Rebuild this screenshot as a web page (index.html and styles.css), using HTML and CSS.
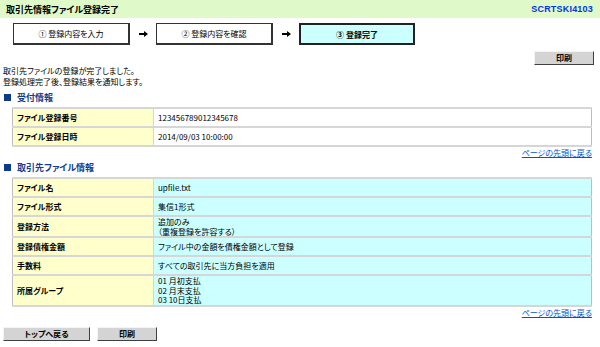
FILE: index.html
```html
<!DOCTYPE html>
<html lang="ja">
<head>
<meta charset="utf-8">
<title>取引先情報ファイル登録完了</title>
<link rel="stylesheet" href="styles.css">
</head>
<body>
<div class="header">
  <span class="title">取引先情報ファイル登録完了</span>
  <span class="code">SCRTSKI4103</span>
</div>

<div class="steps">
  <div class="step">① 登録内容を入力</div>
  <div class="arrow"><svg width="9" height="6" viewBox="0 0 9 6"><path d="M0 2h5V0l4 3-4 3V4H0z" fill="#000"/></svg></div>
  <div class="step">② 登録内容を確認</div>
  <div class="arrow"><svg width="9" height="6" viewBox="0 0 9 6"><path d="M0 2h5V0l4 3-4 3V4H0z" fill="#000"/></svg></div>
  <div class="step current">③ 登録完了</div>
</div>

<div class="toolbar">
  <button class="btn btn-print-top">印刷</button>
</div>

<div class="message">
  <p>取引先ファイルの登録が完了しました。</p>
  <p>登録処理完了後、登録結果を通知します。</p>
</div>

<h2 class="section-title"><span class="sq"></span>受付情報</h2>
<table class="info">
  <tr><th>ファイル登録番号</th><td>123456789012345678</td></tr>
  <tr><th>ファイル登録日時</th><td>2014/09/03 10:00:00</td></tr>
</table>
<div class="toplink"><a href="#">ページの先頭に戻る</a></div>

<h2 class="section-title second"><span class="sq"></span>取引先ファイル情報</h2>
<table class="info cyan">
  <tr class="r1"><th>ファイル名</th><td>upfile.txt</td></tr>
  <tr class="r1"><th>ファイル形式</th><td>集信1形式</td></tr>
  <tr class="r2"><th>登録方法</th><td>追加のみ<br>（重複登録を許容する）</td></tr>
  <tr class="r1"><th>登録債権金額</th><td>ファイル中の金額を債権金額として登録</td></tr>
  <tr class="r1"><th>手数料</th><td>すべての取引先に当方負担を適用</td></tr>
  <tr class="r3"><th>所属グループ</th><td>01 月初支払<br>02 月末支払<br>03 10日支払</td></tr>
</table>
<div class="toplink"><a href="#">ページの先頭に戻る</a></div>

<div class="bottom-buttons">
  <button class="btn btn-top">トップへ戻る</button>
  <button class="btn btn-print">印刷</button>
</div>
</body>
</html>
```

FILE: styles.css
```css
* { box-sizing: border-box; }
html, body {
  margin: 0;
  padding: 0;
  background: #ffffff;
}
body {
  font-family: "Noto Sans CJK JP", "Liberation Sans", sans-serif;
  font-size: 8px;
  color: #000;
  font-feature-settings: "palt";
  width: 600px;
}
p { margin: 0; }

.header {
  height: 18px;
  background: #dff9c8;
  display: flex;
  justify-content: space-between;
  align-items: center;
  padding: 0 7px 0 6px;
}
.title {
  font-weight: bold;
  font-size: 9px;
}
.code {
  font-family: "Liberation Sans", "DejaVu Sans", sans-serif;
  font-weight: bold;
  font-size: 9px;
  letter-spacing: 0.2px;
  color: #0033ee;
}

.steps {
  display: flex;
  align-items: center;
  margin-top: 5px;
  padding-left: 13px;
}
.step {
  width: 117px;
  height: 22px;
  border: 1px solid #333;
  border-right-width: 2px;
  border-bottom-width: 2px;
  display: flex;
  align-items: center;
  justify-content: center;
  font-size: 8px;
}
.step.current {
  width: 116px;
  border: 2px solid #222;
  background: #ccffff;
  font-weight: bold;
}
.arrow {
  width: 26px;
  display: flex;
  justify-content: center;
  align-items: center;
}
.arrow svg { display: block; }

.toolbar {
  display: flex;
  justify-content: flex-end;
  padding-right: 6px;
  margin-top: 6px;
}
.btn {
  font-family: "Noto Sans CJK JP", sans-serif;
  font-feature-settings: "palt";
  font-size: 8px;
  font-weight: bold;
  height: 14px;
  padding: 0;
  line-height: 10px;
  background: #d4d4d4;
  border: 1px solid;
  border-color: #f4f4f4 #404040 #404040 #f4f4f4;
  color: #000;
}
.btn-print-top { width: 60px; }

.message {
  padding-left: 3px;
  line-height: 11px;
  margin-top: 0;
}

.section-title {
  margin: 4px 0 0 0;
  padding-left: 4px;
  display: flex;
  align-items: center;
  gap: 6px;
  height: 12px;
  font-size: 9px;
  font-weight: bold;
  color: #113d8c;
}
.section-title.second { margin-top: 3px; }
.sq {
  width: 7px;
  height: 7px;
  background: #0d3c8a;
}

.info {
  margin: 4px 0 0 12px;
  width: 580px;
  border-collapse: collapse;
  border: 1px solid #bdbdbd;
}
.info th, .info td {
  border-top: 2px solid #d6d6d6;
  border-bottom: 2px solid #d6d6d6;
  padding: 0 4px;
  height: 19px;
  line-height: 9.5px;
  text-align: left;
  vertical-align: middle;
  font-size: 8px;
}
.info th {
  width: 141px;
  background: #ffffcc;
  font-weight: bold;
  border-right: 1px solid #d6d6d6;
}
.info td {
  background: #ffffff;
}
.info.cyan td { background: #ccffff; }
.info tr.r2 th, .info tr.r2 td { height: 20px; }
.info tr.r3 th, .info tr.r3 td { height: 30px; }

.toplink {
  display: flex;
  justify-content: flex-end;
  width: 592px;
  margin-top: 1px;
  line-height: 10px;
}
.toplink a {
  color: #0055cc;
  text-decoration: underline;
  font-size: 8px;
}

.bottom-buttons {
  display: flex;
  gap: 7px;
  padding-left: 3px;
  margin-top: 9px;
}
.btn-top { width: 87px; }
.btn-print { width: 60px; }
```
